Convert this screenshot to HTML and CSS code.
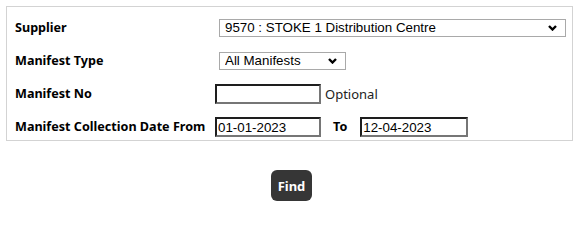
FILE: index.html
```html
<!DOCTYPE html>
<html lang="en">
<head>
<meta charset="utf-8">
<title>Manifest Search</title>
<link rel="stylesheet" href="styles.css">
</head>
<body>
<div class="panel">
  <div class="form">
    <label class="label">Supplier</label>
    <div class="field">
      <span class="select-wrap">
        <select class="select select-supplier">
          <option>9570 : STOKE 1 Distribution Centre</option>
        </select>
        <svg class="chev" width="9" height="6" viewBox="0 0 9 6"><path d="M1 1 L4.5 4.5 L8 1" fill="none" stroke="#000" stroke-width="2.4"/></svg>
      </span>
    </div>

    <label class="label">Manifest Type</label>
    <div class="field">
      <span class="select-wrap">
        <select class="select select-type">
          <option>All Manifests</option>
        </select>
        <svg class="chev" width="9" height="6" viewBox="0 0 9 6"><path d="M1 1 L4.5 4.5 L8 1" fill="none" stroke="#000" stroke-width="2.4"/></svg>
      </span>
    </div>

    <label class="label">Manifest No</label>
    <div class="field">
      <input class="text" type="text" value="">
      <span class="hint">Optional</span>
    </div>

    <label class="label">Manifest Collection Date From</label>
    <div class="field">
      <input class="text" type="text" value="01-01-2023">
      <span class="label to">To</span>
      <input class="text text-to" type="text" value="12-04-2023">
    </div>
  </div>
</div>
<div class="actions">
  <button class="find" type="button">Find</button>
</div>
</body>
</html>
```

FILE: styles.css
```css
html, body {
  margin: 0;
  padding: 0;
  background: #fff;
}

body {
  font-family: "Noto Sans", "DejaVu Sans", sans-serif;
  color: #000;
}

.panel {
  box-sizing: border-box;
  width: 567px;
  margin: 6px 0 0 6px;
  border: 1px solid #d3d3d3;
  padding: 11px 0 3px 8px;
}

.form {
  display: grid;
  grid-template-columns: 200px 1fr;
  grid-auto-rows: 20px;
  row-gap: 13px;
  align-items: center;
}

.label {
  font-weight: bold;
  font-size: 12.6px;
  line-height: 20px;
  white-space: nowrap;
}

.field {
  display: flex;
  align-items: center;
  height: 20px;
}

.select-wrap {
  position: relative;
  display: inline-block;
  margin-left: 4px;
  height: 18px;
}

.select {
  appearance: none;
  -webkit-appearance: none;
  box-sizing: border-box;
  height: 18px;
  margin: 0;
  border: 1px solid #a9a9a9;
  border-radius: 0;
  background: #fff;
  padding: 0 20px 0 5px;
  font-family: "Liberation Sans", Arial, sans-serif;
  font-size: 13.33px;
  line-height: 16px;
  color: #000;
  display: block;
}

.select-supplier {
  width: 347px;
}

.select-type {
  width: 127px;
}

.chev {
  position: absolute;
  right: 9px;
  top: 6px;
  pointer-events: none;
}

.text {
  box-sizing: border-box;
  width: 106px;
  height: 20px;
  margin: 0;
  padding: 0 1px;
  border-width: 2px;
  border-style: solid;
  border-color: #1e1e1e #767676 #767676 #1e1e1e;
  font-family: "Liberation Sans", Arial, sans-serif;
  font-size: 13.33px;
  color: #000;
  background: #fff;
}

.text-to {
  width: 108px;
}

.hint {
  margin-left: 4px;
  font-size: 13px;
  color: #222;
}

.to {
  margin: 0 13px 0 12px;
}

.actions {
  width: 581px;
  display: flex;
  justify-content: center;
  padding-top: 29px;
  padding-left: 2px;
  box-sizing: border-box;
}

.find {
  width: 41px;
  height: 31px;
  border: none;
  border-radius: 6px;
  background: #363636;
  color: #fff;
  font-family: "Noto Sans", "DejaVu Sans", sans-serif;
  font-weight: bold;
  font-size: 13px;
  padding: 0;
}
```
